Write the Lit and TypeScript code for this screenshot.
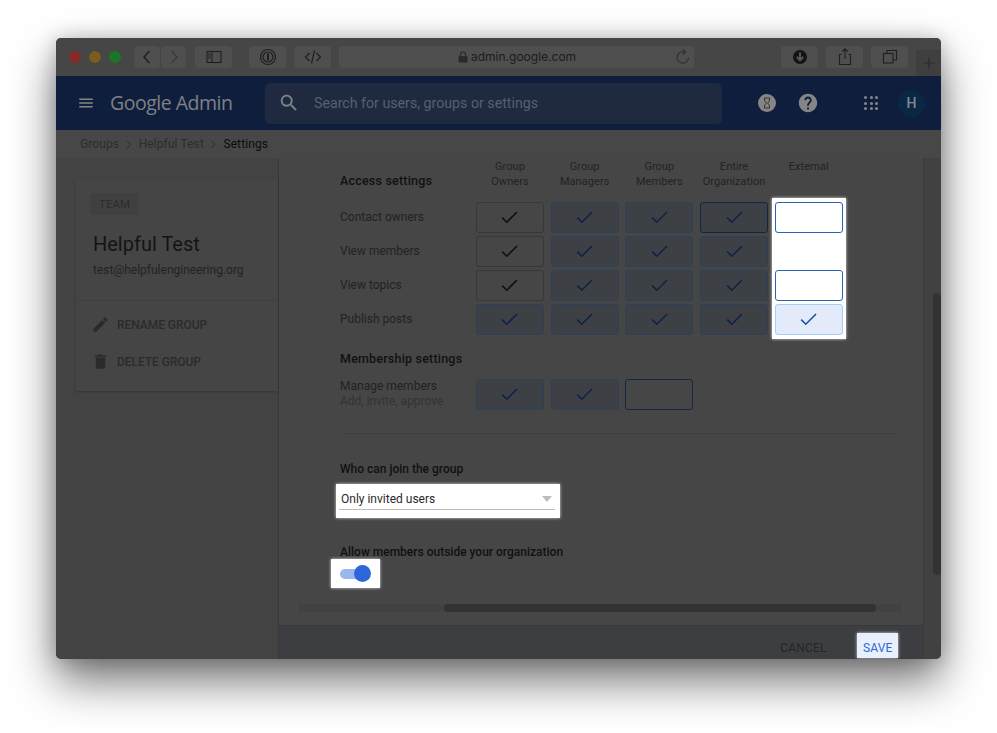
import { LitElement, html, css, svg } from "lit";
import { customElement } from "lit/decorators.js";

const icon = (d: string, size: number, fill: string) => html`<svg
  width=${size}
  height=${size}
  viewBox="0 0 24 24"
  fill=${fill}
>
  ${svg`<path d=${d} />`}
</svg>`;

const ICONS = {
  menu: "M3 18h18v-2H3v2zm0-5h18v-2H3v2zm0-7v2h18V6H3z",
  search:
    "M15.5 14h-.79l-.28-.27C15.41 12.59 16 11.11 16 9.5 16 5.91 13.09 3 9.5 3S3 5.91 3 9.5 5.91 16 9.5 16c1.61 0 3.09-.59 4.23-1.57l.27.28v.79l5 4.99L20.49 19l-4.99-5zm-6 0C7.01 14 5 11.99 5 9.5S7.01 5 9.5 5 14 7.01 14 9.5 11.99 14 9.5 14z",
  edit: "M3 17.25V21h3.75L17.81 9.94l-3.75-3.75L3 17.25zM20.71 7.04c.39-.39.39-1.02 0-1.41l-2.34-2.34c-.39-.39-1.02-.39-1.41 0l-1.83 1.83 3.75 3.75 1.83-1.83z",
  trash:
    "M6 19c0 1.1.9 2 2 2h8c1.1 0 2-.9 2-2V7H6v12zM19 4h-3.5l-1-1h-5l-1 1H5v2h14V4z",
  help: "M12 2C6.48 2 2 6.48 2 12s4.48 10 10 10 10-4.48 10-10S17.52 2 12 2zm1 17h-2v-2h2v2zm2.07-7.75l-.9.92C13.45 12.9 13 13.5 13 15h-2v-.5c0-1.1.45-2.1 1.17-2.83l1.24-1.26c.37-.36.59-.86.59-1.41 0-1.1-.9-2-2-2s-2 .9-2 2H8c0-2.21 1.79-4 4-4s4 1.79 4 4c0 .88-.36 1.68-.93 2.25z",
};

// stroke icon in the safari toolbar, 20x20 box
const tool = (body: unknown) => html`<svg
  width="20"
  height="20"
  viewBox="0 0 20 20"
  fill="none"
  stroke="#1f1f1f"
  stroke-width="1.1"
>
  ${body}
</svg>`;

const check = html`<svg class="tick" width="17" height="13" viewBox="0 0 17 13" fill="none">
  ${svg`<path d="M1.2 6.6 L5.8 11.2 L16 1" stroke="currentColor" stroke-width="1.6" />`}
</svg>`;

const COLUMNS = [
  ["Group", "Owners"],
  ["Group", "Managers"],
  ["Group", "Members"],
  ["Entire", "Organization"],
  ["External", ""],
];

// cell kinds per row, first four columns
const ACCESS_ROWS = [
  { label: "Contact owners", cells: ["own", "on", "on", "strong"] },
  { label: "View members", cells: ["own", "on", "on", "on"] },
  { label: "View topics", cells: ["own", "on", "on", "on"] },
  { label: "Publish posts", cells: ["on", "on", "on", "on"] },
];

@customElement("app-root")
export class AppRoot extends LitElement {
  static styles = css`
    :host {
      display: block;
      height: 733px;
      padding: 38px 56px 0;
      box-sizing: border-box;
      background: #fff;
      font-family: Roboto, "Liberation Sans", sans-serif;
      color: #161616;
      overflow: hidden;
    }
    * {
      box-sizing: border-box;
    }
    .window {
      width: 885px;
      height: 621px;
      border-radius: 5px;
      overflow: hidden;
      display: flex;
      flex-direction: column;
      background: #464646;
    }
    .shadow {
      width: 885px;
      height: 621px;
      border-radius: 5px;
      box-shadow: 0 22px 45px rgba(0, 0, 0, 0.55), 0 0 20px rgba(0, 0, 0, 0.2);
    }

    /* safari toolbar */
    .toolbar {
      height: 38px;
      flex: none;
      display: flex;
      align-items: flex-start;
      padding: 8px 0 0 13px;
      background: #464646;
    }
    .lights {
      display: flex;
      gap: 8px;
      margin: 5px 13px 0 0;
    }
    .light {
      width: 12px;
      height: 12px;
      border-radius: 50%;
    }
    .red {
      background: #842b29;
    }
    .yellow {
      background: #7a5c1e;
    }
    .green {
      background: #1c742b;
    }
    .btn {
      width: 37px;
      height: 22px;
      margin-right: 8px;
      border-radius: 4px;
      background: #4f4f4f;
      display: flex;
      align-items: center;
      justify-content: center;
    }
    .btn.nav {
      width: 26px;
      margin-right: 0;
    }
    .btn.last-nav {
      margin-right: 9px;
      border-left: 1px solid #454545;
    }
    .btn.sidebar {
      margin-right: 17px;
    }
    .url {
      width: 355px;
      height: 22px;
      margin-right: 87px;
      padding: 0 1px 0 119px;
      border-radius: 4px;
      background: #4f4f4f;
      display: flex;
      align-items: center;
      gap: 3px;
      font: 12px/22px Inter, Roboto, sans-serif;
      color: #1c1c1c;
    }
    .url span {
      flex: 1;
    }
    .tab {
      width: 25px;
      height: 26px;
      margin-top: 4px;
      background: #3f3f3f;
      display: flex;
      align-items: center;
      justify-content: center;
    }

    /* admin header */
    .header {
      height: 54px;
      flex: none;
      display: flex;
      align-items: center;
      background: #0f1e3c;
      padding-left: 21px;
    }
    .logo {
      width: 170px;
      flex: none;
      padding-left: 15px;
      font: 400 19.5px/24px "Open Sans", Roboto, sans-serif;
      letter-spacing: -0.5px;
      color: #7f8185;
      white-space: nowrap;
    }
    .search {
      width: 457px;
      height: 41px;
      flex: none;
      border-radius: 5px;
      background: #1f2a40;
      display: flex;
      align-items: center;
      gap: 14px;
      padding-left: 13px;
      font-size: 14.2px;
      color: #566070;
    }
    .actions {
      display: flex;
      align-items: center;
      margin-left: 36px;
    }
    .hourglass {
      width: 18px;
      height: 18px;
      border-radius: 50%;
      background: #858585;
      display: flex;
      align-items: center;
      justify-content: center;
    }
    .helpicon {
      display: flex;
      margin: 0 45px 0 21px;
    }
    .apps {
      width: 14px;
      display: grid;
      grid-template-columns: repeat(3, 3px);
      gap: 2.5px;
      margin-right: 20px;
    }
    .apps i {
      width: 3px;
      height: 3px;
      border-radius: 50%;
      background: #858585;
    }
    .avatar {
      width: 27px;
      height: 27px;
      border-radius: 50%;
      background: #0a2844;
      color: #868a8e;
      font-size: 14px;
      font-weight: 500;
      display: flex;
      align-items: center;
      justify-content: center;
    }

    .crumbs {
      height: 28px;
      flex: none;
      display: flex;
      align-items: center;
      padding-left: 24px;
      font-size: 12px;
      letter-spacing: 0.1px;
      color: #2d2d2d;
      background: #474747;
      box-shadow: 0 1px 0 #404040;
    }
    .crumbs svg {
      margin: 0 7px 0 6.5px;
    }
    .crumbs b {
      font-weight: 400;
      color: #0c0c0c;
    }

    .body {
      flex: 1;
      min-height: 0;
      display: flex;
    }
    .side {
      width: 223px;
      flex: none;
      padding: 22px 0 0 20px;
      background: #434343;
      border-right: 1px solid #383838;
    }
    .card {
      height: 211px;
      background: #454545;
      box-shadow: 0 1px 2px rgba(0, 0, 0, 0.22);
      padding-top: 13px;
    }
    .tag {
      width: 49px;
      height: 22px;
      margin-left: 14px;
      background: #404040;
      font-size: 11.5px;
      line-height: 22px;
      text-align: center;
      color: #2c2c2c;
    }
    .name {
      margin: 16px 0 0 17px;
      font-size: 20px;
      line-height: 26px;
      color: #141414;
    }
    .mail {
      margin: 5px 0 0 17px;
      font-size: 12px;
      line-height: 16px;
      color: #232323;
    }
    .card hr {
      margin: 22px 0 0;
      border: 0;
      border-top: 1px solid #3f3f3f;
    }
    .action {
      display: flex;
      align-items: center;
      gap: 7px;
      height: 37px;
      padding-left: 15px;
      font-size: 12px;
      font-weight: 500;
      letter-spacing: -0.05px;
      color: #2b2b2b;
    }
    .actions-list {
      padding-top: 5px;
    }

    .main {
      width: 644px;
      flex: none;
      display: flex;
      flex-direction: column;
      background: #464646;
    }
    .scroll {
      flex: 1;
      min-height: 0;
      padding: 1px 0 0 61px;
      font-size: 12px;
    }
    .grid {
      display: grid;
      grid-template-columns: 129.3px repeat(5, 68px);
      grid-template-rows: 28px;
      column-gap: 6.7px;
    }
    .colhead {
      grid-row: 1;
      font-size: 11px;
      line-height: 15px;
      text-align: center;
      white-space: nowrap;
      color: #232323;
      letter-spacing: 0.05px;
    }
    .h {
      font-size: 12.5px;
      font-weight: 500;
      line-height: 16px;
      letter-spacing: 0.2px;
      color: #111;
    }
    .h.small {
      font-size: 12px;
      letter-spacing: 0;
    }
    .access {
      grid-column: 1;
      grid-row: 1;
      align-self: end;
      margin-bottom: -2px;
    }
    .table {
      display: flex;
      align-items: flex-start;
      gap: 6.7px;
      margin-top: 15px;
    }
    .rows {
      display: grid;
      grid-template-columns: 129.3px repeat(4, 68px);
      grid-auto-rows: 31px;
      column-gap: 6.7px;
      row-gap: 3px;
      align-items: center;
      color: #222;
    }
    .rowlabel {
      margin-bottom: 2px;
    }
    .cell {
      height: 31px;
      width: 68px;
      border: 1px solid #383838;
      border-radius: 3px;
      display: flex;
      align-items: center;
      justify-content: center;
      color: #101010;
    }
    .cell.on {
      border-color: #2c4159;
      background: #3d4045;
      color: #0f2245;
    }
    .cell.strong {
      border-color: #132645;
      background: #3d4045;
      color: #0f2245;
    }
    .cell.empty {
      border-color: #132645;
    }
    .external {
      margin: -4px -3px;
      padding: 4px 3px;
      background: #fff;
      box-shadow: 0 0 3px rgba(255, 255, 255, 0.8);
      display: flex;
      flex-direction: column;
      gap: 3px;
    }
    .external .cell {
      border-color: #2a66b0;
    }
    .external .blank {
      height: 31px;
    }
    .external .cell.sel {
      background: #e3ebfa;
      border-color: #a6cdf5;
      color: #1f4fa8;
    }
    .membership {
      margin-top: 16px;
    }
    .manage {
      display: grid;
      grid-template-columns: 129.3px repeat(3, 68px);
      column-gap: 6.7px;
      margin-top: 12px;
    }
    .managelabel {
      line-height: 15px;
      color: #222;
    }
    .managelabel small {
      display: block;
      font-size: 12px;
      color: #333;
    }
    .divider {
      width: 560px;
      margin: 23px 0 0;
      border: 0;
      border-top: 1px solid #404040;
    }
    .join {
      margin-top: 27px;
    }
    .select {
      width: 224px;
      height: 34px;
      margin: 7px 0 0 -4px;
      padding: 0 5px 0 3px;
      background: #fff;
      box-shadow: 0 0 3px rgba(255, 255, 255, 0.8);
    }
    .line {
      height: 26px;
      padding: 4px 3px 0 2px;
      display: flex;
      align-items: center;
      justify-content: space-between;
      border-bottom: 1px solid #bdbdbd;
      color: #2a2a2a;
    }
    .caret {
      width: 0;
      height: 0;
      border: 5.5px solid transparent;
      border-top: 6px solid #bdbdbd;
      border-bottom: 0;
    }
    .allow {
      margin-top: 26px;
    }
    .switch {
      width: 49px;
      height: 29px;
      margin: -1px 0 0 -9px;
      padding-left: 9px;
      background: #fff;
      box-shadow: 0 0 3px rgba(255, 255, 255, 0.8);
      display: flex;
      align-items: center;
    }
    .track {
      width: 30px;
      height: 10px;
      border-radius: 5px;
      background: #9cb6ee;
      display: flex;
      align-items: center;
      justify-content: flex-end;
    }
    .thumb {
      width: 17px;
      height: 17px;
      margin-right: -1px;
      border-radius: 50%;
      background: #2e68d8;
      flex: none;
    }
    .hbar {
      width: 604px;
      height: 8px;
      margin: 16px 0 0 -42px;
      padding-left: 146px;
      background: #424242;
    }
    .hbar div {
      width: 432px;
      height: 8px;
      border-radius: 4px;
      background: #333;
    }
    .footer {
      height: 33px;
      flex: none;
      display: flex;
      align-items: flex-start;
      justify-content: flex-end;
      gap: 30px;
      padding: 7px 25px 0 0;
      background: #3d3e42;
      box-shadow: 0 -1px 0 #383838;
      font-size: 12px;
      line-height: 15px;
      letter-spacing: 0.15px;
      color: #252525;
    }
    .cancel {
      margin-top: 8px;
    }
    .save {
      width: 41.5px;
      height: 25px;
      padding: 8px 0 0 1px;
      text-align: center;
      background: #e9effc;
      box-shadow: 0 0 3px rgba(255, 255, 255, 0.8);
      color: #2e68d8;
    }
    .vbar {
      width: 18px;
      flex: none;
      background: #414141;
      border-left: 1px solid #3a3a3a;
      padding: 135px 0 0 9px;
    }
    .vbar div {
      width: 8px;
      height: 282px;
      border-radius: 4px;
      background: #333;
    }
  `;

  private cell(kind: string) {
    return html`<div class="cell ${kind}">${kind === "empty" ? "" : check}</div>`;
  }

  private renderToolbar() {
    return html`<div class="toolbar">
      <div class="lights">
        <div class="light red"></div>
        <div class="light yellow"></div>
        <div class="light green"></div>
      </div>
      <div class="btn nav">
        ${tool(svg`<path d="M12.5 4 L7 10 L12.5 16" stroke-width="1.5" />`)}
      </div>
      <div class="btn nav last-nav">
        ${tool(svg`<path d="M7.5 4 L13 10 L7.5 16" stroke="#3a3a3a" stroke-width="1.5" />`)}
      </div>
      <div class="btn sidebar">
        ${tool(svg`<rect x="3" y="4.5" width="14" height="11" /><path d="M8 4.5 V15.5 M4 7h3M4 9h3M4 11h3" stroke-width="0.9" />`)}
      </div>
      <div class="btn">
        ${tool(svg`<circle cx="10" cy="10" r="7.5" stroke-width="1.2" /><circle cx="10" cy="10" r="5" stroke-width="1.2" /><path d="M10 6.5 V13.5" stroke-width="2" />`)}
      </div>
      <div class="btn">
        ${tool(svg`<path d="M6.5 6 L2.5 10 L6.5 14 M13.5 6 L17.5 10 L13.5 14 M11.5 3.5 L8.5 16.5" stroke-width="1.2" />`)}
      </div>
      <div class="url">
        <svg width="10" height="12" viewBox="0 0 10 12">
          <path
            d="M2.5 5V3.5a2.5 2.5 0 0 1 5 0V5"
            fill="none"
            stroke="#2a2a2a"
            stroke-width="1.2"
          />
          <rect x="0.5" y="5" width="9" height="6.5" rx="1" fill="#2a2a2a" />
        </svg>
        <span>admin.google.com</span>
        ${tool(svg`<path d="M15.5 10.5 A5.7 5.7 0 1 1 11.5 5 M10 2.5 L12.5 5 L10 7.5" stroke="#2e2e2e" />`)}
      </div>
      <div class="btn">
        <svg width="16" height="16" viewBox="0 0 16 16">
          <circle cx="8" cy="8" r="7" fill="#141414" />
          <path d="M8 3.5V11M4.8 8L8 11.3L11.2 8" fill="none" stroke="#555" stroke-width="2" />
        </svg>
      </div>
      <div class="btn">
        ${tool(svg`<path d="M6.5 7.5 H4.5 V17.5 H15.5 V7.5 H13.5 M10 12 V2 M7.3 4.5 L10 1.8 L12.7 4.5" />`)}
      </div>
      <div class="btn">
        ${tool(svg`<rect x="3.5" y="6.5" width="9.5" height="9.5" /><path d="M7 6.5 V3.5 H16.5 V13 H13" />`)}
      </div>
      <div class="tab">
        ${tool(svg`<path d="M10 4.5 V15.5 M4.5 10 H15.5" stroke="#2a2a2a" />`)}
      </div>
    </div>`;
  }

  private renderHeader() {
    return html`<div class="header">
      ${icon(ICONS.menu, 18, "#858585")}
      <div class="logo">Google Admin</div>
      <div class="search">
        ${icon(ICONS.search, 22, "#7f8287")}
        <span>Search for users, groups or settings</span>
      </div>
      <div class="actions">
        <div class="hourglass">
          <svg width="8" height="12" viewBox="0 0 8 12" fill="none" stroke="#333" stroke-width="1">
            <path d="M1.5 1H6.5V3C6.5 4.5 4.8 5 4.8 6C4.8 7 6.5 7.5 6.5 9V11H1.5V9C1.5 7.5 3.2 7 3.2 6C3.2 5 1.5 4.5 1.5 3Z" />
          </svg>
        </div>
        <div class="helpicon">${icon(ICONS.help, 22, "#858585")}</div>
        <div class="apps">${[...Array(9)].map(() => html`<i></i>`)}</div>
        <div class="avatar">H</div>
      </div>
    </div>`;
  }

  private renderSide() {
    return html`<div class="side">
      <div class="card">
        <div class="tag">TEAM</div>
        <div class="name">Helpful Test</div>
        <div class="mail">test@helpfulengineering.org</div>
        <hr />
        <div class="actions-list">
          <div class="action">${icon(ICONS.edit, 19, "#2b2b2b")} RENAME GROUP</div>
          <div class="action">${icon(ICONS.trash, 19, "#2b2b2b")} DELETE GROUP</div>
        </div>
      </div>
    </div>`;
  }

  private renderMain() {
    return html`<div class="main">
      <div class="scroll">
        <div class="grid">
          <div class="h access">Access settings</div>
          ${COLUMNS.map(
            (c, i) => html`<div class="colhead" style="grid-column:${i + 2}">
              ${c[0]}<br />${c[1]}
            </div>`
          )}
        </div>
        <div class="table">
          <div class="rows">
            ${ACCESS_ROWS.map(
              (r) => html`<div class="rowlabel">${r.label}</div>
                ${r.cells.map((k) => this.cell(k))}`
            )}
          </div>
          <div class="external">
            ${this.cell("empty")}
            <div class="blank"></div>
            ${this.cell("empty")} ${this.cell("sel")}
          </div>
        </div>
        <div class="h membership">Membership settings</div>
        <div class="manage">
          <div class="managelabel">Manage members<small>Add, invite, approve</small></div>
          ${this.cell("on")} ${this.cell("on")} ${this.cell("empty")}
        </div>
        <hr class="divider" />
        <div class="h small join">Who can join the group</div>
        <div class="select">
          <div class="line">Only invited users<span class="caret"></span></div>
        </div>
        <div class="h small allow">Allow members outside your organization</div>
        <div class="switch">
          <div class="track"><div class="thumb"></div></div>
        </div>
        <div class="hbar"><div></div></div>
      </div>
      <div class="footer">
        <span class="cancel">CANCEL</span>
        <span class="save">SAVE</span>
      </div>
    </div>`;
  }

  render() {
    return html`<div class="shadow">
      <div class="window">
        ${this.renderToolbar()} ${this.renderHeader()}
        <div class="crumbs">
          Groups
          <svg width="6" height="9" viewBox="0 0 6 9" fill="none" stroke="#2d2d2d">
            <path d="M1 1L5 4.5L1 8" />
          </svg>
          Helpful Test
          <svg width="6" height="9" viewBox="0 0 6 9" fill="none" stroke="#2d2d2d">
            <path d="M1 1L5 4.5L1 8" />
          </svg>
          <b>Settings</b>
        </div>
        <div class="body">
          ${this.renderSide()} ${this.renderMain()}
          <div class="vbar"><div></div></div>
        </div>
      </div>
    </div>`;
  }
}
